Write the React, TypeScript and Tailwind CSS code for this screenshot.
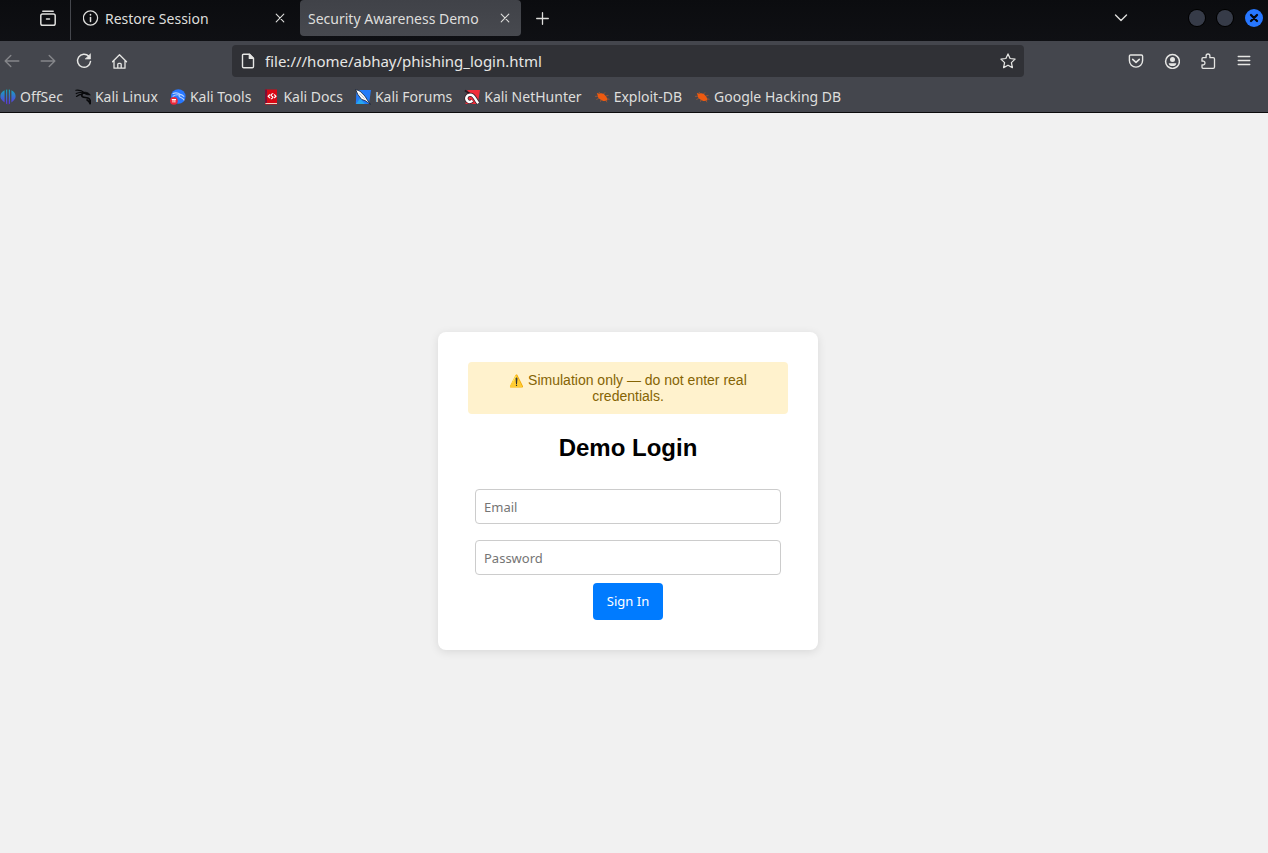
import type { ReactNode } from "react";

function Glyph({ children, className = "size-4" }: { children: ReactNode; className?: string }) {
  return (
    <svg
      viewBox="0 0 16 16"
      className={`shrink-0 ${className}`}
      fill="none"
      stroke="currentColor"
      strokeWidth="1.25"
      strokeLinecap="round"
      strokeLinejoin="round"
      aria-hidden="true"
    >
      {children}
    </svg>
  );
}

function CloseGlyph() {
  return (
    <Glyph className="size-4">
      <path d="M4.200 4.200l7.600 7.600M11.800 4.200l-7.600 7.600" strokeWidth="1.100" />
    </Glyph>
  );
}

function IconButton({ label, dim, children }: { label: string; dim?: boolean; children: ReactNode }) {
  return (
    <button type="button" aria-label={label} className={`flex size-4 items-center justify-center ${dim ? "text-[#85868a]" : "text-[#e6e6e4]"}`}>
      {children}
    </button>
  );
}

function Beetle() {
  return (
    <svg viewBox="0 0 16 16" className="size-4" aria-hidden="true">
      <path d="M2.800 4l2.600.8C7.400 3.800 9.500 4.600 11 6.200c1.500 1.300 2.300 2.800 2.400 5-2.200 1.300-5.200.9-6.900-.7C4.800 9.900 3.700 8.300 3.700 6.500z" fill="#ee5a10" />
      <path d="M6 4.800L5 3M9.500 5l1.600-1.600M11.800 7l2.700-.6M13 9.800l2.500.5M11.500 11l1.500 2.300M7.200 10.500l-.8 2.200M4.800 9.200L2.400 10.600M4 7.200L1 7.400" stroke="#b85a2c" strokeWidth=".7" fill="none" />
    </svg>
  );
}

const bookmarks: { name: string; icon: ReactNode }[] = [
  {
    name: "OffSec",
    icon: (
      <svg viewBox="0 0 16 16" className="size-4" aria-hidden="true">
        <defs>
          <linearGradient id="offsec" x1="0" y1="0" x2="0" y2="16" gradientUnits="userSpaceOnUse">
            <stop offset="0" stopColor="#10adbb" />
            <stop offset="1" stopColor="#642ce6" />
          </linearGradient>
        </defs>
        <g fill="url(#offsec)">
          <path d="M6 .8L7.200.4v15L6 14.600zM8.800.4l1.200.4v13.800l-1.200.8z" />
          <path d="M4.600 1.200v12.300L2.600 11.700C1 10.200.3 8.600.4 7 .5 4.200 2.300 2.200 4.600 1.200zM11.400 1.200v12.300l2-1.800c1.600-1.500 2.300-3.100 2.200-4.700-.1-2.800-1.900-4.800-4.200-5.800z" />
        </g>
      </svg>
    ),
  },
  {
    name: "Kali Linux",
    icon: (
      <svg viewBox="0 0 16 16" className="size-4" fill="none" stroke="#08090b" strokeLinecap="round" aria-hidden="true">
        <path d="M.8 1.300C4 .8 7.300 1.700 9.800 3.800M1.200 4.600c3-1.500 5.600-1.500 8.400-.2M1.500 7.500c1.800-1.600 3.500-2.300 5.500-2.400" strokeWidth="1.100" />
        <path d="M9 4c-2.400.4-3 2.500-1.400 3.700 2 1.200 4.900.4 6.700 2.200 1.200 1.300 1.300 3 1.100 5.300-.7-2.300-1.700-3.500-3.300-4.300" strokeWidth="1.700" />
        <path d="M9.500 3.200c1.800-.2 3.900.4 5.800 2.700l-2.900-.2c-1 0-1.900-.5-2.800-1.200z" fill="#08090b" strokeWidth=".8" />
      </svg>
    ),
  },
  {
    name: "Kali Tools",
    icon: (
      <svg viewBox="0 0 16 16" className="size-4" fill="none" aria-hidden="true">
        <circle cx="8.300" cy="7.500" r="7.300" fill="#2777ff" />
        <path d="M3 4.400c3-1.100 5.300-.6 7.400 1M3 7.300c2.200-1.500 4.300-1.800 6.500-1.200M9.800 5.400c1.700 0 2.900.8 4 2M9.300 6.200c-1.300 2.600 3.500 1.600 4.700 4.800" stroke="#b9d4ff" strokeWidth="1.100" strokeLinecap="round" />
        <circle cx="3.900" cy="11.800" r="3.900" fill="#ec2739" />
        <path d="M1.800 10.500h4.200M3 10.500v3M4.900 10.500v3" stroke="#fff" strokeWidth="1" />
      </svg>
    ),
  },
  {
    name: "Kali Docs",
    icon: (
      <svg viewBox="0 0 16 16" className="size-4" fill="none" aria-hidden="true">
        <path d="M2 .5h12v15H2z" fill="#d90714" />
        <path d="M2 .5h2v13.500H2z" fill="#7b1038" />
        <path d="M2.500 14.500h11.500" stroke="#eed6c4" strokeWidth="1" />
        <path d="M6.900 5.500L5.200 7.300l1.700 1.700M11.200 5.500l1.700 1.700-1.700 1.800M10.300 4.500C7.300 5.200 7.700 6.700 9 7.300c1.500.6 1 2-1.200 2.700" stroke="#fff" strokeWidth="1.200" />
      </svg>
    ),
  },
  {
    name: "Kali Forums",
    icon: (
      <svg viewBox="0 0 16 16" className="size-4" aria-hidden="true">
        <path d="M1.500 1h14.500l-2 14H.8z" fill="#237bf8" />
        <path d="M1 15l4-5.500 5 5.500z" fill="#28a7ed" />
        <path d="M.5.300l4.600 2L10 7.200l2 3.300 3.500 4.800-5.400-3.700-3.500-1.200-3.800-5z" fill="#fff" stroke="#101c30" strokeWidth=".8" />
        <path d="M4.300 4.500l5 5" stroke="#78869b" strokeWidth=".6" />
      </svg>
    ),
  },
  {
    name: "Kali NetHunter",
    icon: (
      <svg viewBox="0 0 16 16" className="size-4" fill="none" aria-hidden="true">
        <path d="M3.500 1H16l-2.300 14H1.500z" fill="#f12d39" />
        <path d="M.8 1.500l5 3" stroke="#271820" strokeWidth="1.500" />
        <path d="M3.600 12C1 9.500 2.600 5.800 6.500 5.800c3.800 0 4.500 4.500 7.700 8.400M3.600 12c1.800 1.700 3.600.8 4.700-.6" stroke="#35202a" strokeWidth="4" />
        <path d="M3.600 12C1 9.500 2.600 5.800 6.500 5.800c3.800 0 4.500 4.500 7.700 8.400M3.600 12c1.800 1.700 3.600.8 4.700-.6" stroke="#fff" strokeWidth="2.500" />
      </svg>
    ),
  },
  { name: "Exploit-DB", icon: <Beetle /> },
  { name: "Google Hacking DB", icon: <Beetle /> },
];

function TabStrip() {
  return (
    <div className="flex h-[41px] items-start bg-linear-to-b from-[#0b0c0f] to-[#0f1014] text-[#dededc]">
      <div className="flex h-10 w-[71px] items-center border-r border-[#45474d] pb-1 pl-10">
        <button type="button" aria-label="Recent browsing" className="size-4">
          <Glyph>
            <path d="M2.800 1.300h10.400" strokeWidth="1.500" />
            <rect x=".8" y="4" width="14.400" height="11.200" rx="1.800" strokeWidth="1.500" />
            <path d="M6.500 9h3" strokeWidth="1.500" />
          </Glyph>
        </button>
      </div>
      <div className="flex h-9 w-[229px] items-center gap-1.5 pr-3 pl-3">
        <Glyph>
          <circle cx="7.500" cy="8" r="7.100" />
          <path d="M7.500 7.500v4" strokeWidth="1.500" />
          <path d="M7.500 4.700v.1" strokeWidth="1.700" />
        </Glyph>
        <span className="flex-1 truncate pt-0.5">Restore Session</span>
        <button type="button" aria-label="Close Restore Session"><CloseGlyph /></button>
      </div>
      <div className="flex h-9 w-[221px] items-center rounded-[4px] bg-linear-to-b from-[#404248] to-[#47494f] px-2">
        <span className="flex-1 truncate pt-0.5">Security Awareness Demo</span>
        <button type="button" aria-label="Close Security Awareness Demo"><CloseGlyph /></button>
      </div>
      <button type="button" aria-label="New tab" className="flex h-9 items-center pl-3.5">
        <Glyph><path d="M7.500 2.700v11.600M1.700 8.500h11.600" strokeWidth="1.300" /></Glyph>
      </button>
      <div className="ml-auto flex h-9 items-center pr-[5px]">
        <button type="button" aria-label="List all tabs" className="mr-15">
          <Glyph><path d="M2.500 5l5.500 5.500L13.500 5" strokeWidth="1.400" /></Glyph>
        </button>
        <div className="flex items-center gap-3">
          <button type="button" aria-label="Minimize" className="size-4 rounded-full bg-[#363b48] ring-1 ring-black" />
          <button type="button" aria-label="Maximize" className="size-4 rounded-full bg-[#363b48] ring-1 ring-black" />
          <button type="button" aria-label="Close window" className="flex size-[18px] items-center justify-center rounded-full bg-[#2777ff] text-[#05070d]">
            <Glyph className="size-4"><path d="M5 5l6 6M11 5l-6 6" strokeWidth="2.300" /></Glyph>
          </button>
        </div>
      </div>
    </div>
  );
}

function NavigationBar() {
  return (
    <div className="flex h-10 items-center pr-4 pl-1">
      <div className="flex gap-5">
        <IconButton label="Back" dim>
          <Glyph><path d="M6.800 2.500L1.200 8l5.600 5.500M1.500 8h13.300" strokeWidth="1.400" /></Glyph>
        </IconButton>
        <IconButton label="Forward" dim>
          <Glyph><path d="M9.200 2.500L14.800 8l-5.600 5.500M14.500 8H1.200" strokeWidth="1.400" /></Glyph>
        </IconButton>
        <IconButton label="Reload">
          <Glyph>
            <path d="M12.800 3.300A6.500 6.500 0 1 0 14.500 8.500" strokeWidth="1.500" />
            <path d="M14.500 1v5h-5z" fill="currentColor" strokeWidth=".6" />
          </Glyph>
        </IconButton>
        <IconButton label="Home">
          <Glyph>
            <path d="M.5 8.700L7.500 1.700l7 7M2 7.500v7.700h11V7.500M5.800 15v-3.800c0-.6.3-.9.900-.9h1.600c.6 0 .9.300.9.900V15" strokeWidth="1.300" />
          </Glyph>
        </IconButton>
      </div>
      <div className="mx-[104px] flex h-8 flex-1 items-center rounded-[4px] bg-[#303136] px-2 text-[#e6e6e4]">
        <Glyph>
          <path d="M3.500 1.200h6l4 4v8.300c0 .7-.5 1.200-1.200 1.200H3.700c-.7 0-1.200-.5-1.200-1.200V2.200c0-.6.400-1 1-1z" strokeWidth="1.400" />
          <path d="M9.300 1.300v4.100h4.100z" fill="currentColor" />
        </Glyph>
        <input aria-label="Address" defaultValue="file:///home/abhay/phishing_login.html" className="mx-[9px] h-8 min-w-0 flex-1 bg-transparent text-[15px] outline-none" />
        <IconButton label="Bookmark this page">
          <Glyph><path d="M8 .9l2.100 4.600 5 .6-3.700 3.500 1 5L8 12.200l-4.400 2.400 1-5L.9 6.100l5-.6z" /></Glyph>
        </IconButton>
      </div>
      <div className="flex gap-5">
        <IconButton label="Save to Pocket">
          <Glyph>
            <path d="M2.700 2h10.600c.8 0 1.300.5 1.300 1.300v4.200a6.600 6.600 0 0 1-13.200 0V3.300C1.400 2.500 1.900 2 2.700 2z" strokeWidth="1.400" />
            <path d="M4.700 6.300L8 9.400l3.300-3.100" strokeWidth="1.600" />
          </Glyph>
        </IconButton>
        <IconButton label="Account">
          <Glyph>
            <circle cx="8.500" cy="8.500" r="6.900" strokeWidth="1.500" />
            <circle cx="8.500" cy="6.600" r="2.500" fill="currentColor" stroke="none" />
            <path d="M4.700 10.200h7.600c-.1 2-1.600 2.900-3.800 2.900s-3.700-.9-3.800-2.900z" fill="currentColor" stroke="none" />
          </Glyph>
        </IconButton>
        <IconButton label="Extensions">
          <Glyph>
            <path d="M2 5.700c0-.6.400-1 1-1h3.100V2.900a1.900 1.900 0 0 1 3.800 0v1.800h3.300c.8 0 1.300.5 1.300 1.300v8c0 .8-.5 1.300-1.300 1.300H3c-.6 0-1-.4-1-1v-2.500h1.700a1.900 1.900 0 0 0 0-3.600H2z" strokeWidth="1.300" />
          </Glyph>
        </IconButton>
        <IconButton label="Open menu">
          <Glyph><path d="M2.200 3.500h11.600M2.200 7.500h11.600M2.200 11.500h11.600" strokeWidth="1.300" /></Glyph>
        </IconButton>
      </div>
    </div>
  );
}

function BookmarksBar() {
  return (
    <nav aria-label="Bookmarks" className="flex h-8 items-center gap-3 border-b border-[#0c0c0d]">
      {bookmarks.map((b) => (
        <a key={b.name} href="#" className="flex shrink-0 items-center gap-1 text-[#dededc]">
          {b.icon}
          <span>{b.name}</span>
        </a>
      ))}
    </nav>
  );
}

export default function App() {
  return (
    <div className="flex min-h-screen flex-col bg-[#f1f1f1]">
      <header className="bg-[#44464d] font-['Noto_Sans',sans-serif] text-[14px] leading-5">
        <TabStrip />
        <NavigationBar />
        <BookmarksBar />
      </header>
      <main className="flex flex-1 items-center justify-center pt-4 pr-3 font-['Liberation_Sans',Arial,sans-serif]">
        <div className="w-[380px] rounded-lg bg-white p-[30px] text-center shadow-[0_2px_10px_rgba(0,0,0,0.1)]">
          <p className="rounded-[4px] bg-[#fff2cd] p-2.5 text-[14px] leading-4 text-[#856404]">
            <span className="text-[12px] leading-none">⚠️</span> Simulation only — do not enter real credentials.
          </p>
          <h2 className="mt-5 mb-5 text-[24px] leading-[27px] font-bold text-black">Demo Login</h2>
          <form className="flex flex-col items-center font-['Noto_Sans',sans-serif] text-[13px] leading-[17px]" onSubmit={(e) => e.preventDefault()}>
            <input type="email" aria-label="Email" placeholder="Email" className="my-2 h-[35px] w-[306px] rounded-[4px] border border-[#ccc] px-2 placeholder:text-[#757575]" />
            <input type="password" aria-label="Password" placeholder="Password" className="my-2 h-[35px] w-[306px] rounded-[4px] border border-[#ccc] px-2 placeholder:text-[#757575]" />
            <button type="submit" className="rounded-[4px] bg-[#007bff] px-3.5 py-2.5 text-white">Sign In</button>
          </form>
        </div>
      </main>
    </div>
  );
}
